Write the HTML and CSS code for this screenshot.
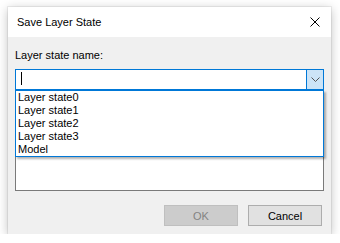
FILE: index.html
```html
<!DOCTYPE html>
<html lang="en">
<head>
  <meta charset="UTF-8" />
  <meta name="viewport" content="width=device-width, initial-scale=1.0" />
  <title>Save Layer State</title>
  <link rel="stylesheet" href="styles.css">
</head>
<body>
  <div class="dialog">
    <div class="titlebar">
      <span>Save Layer State</span>
      <svg class="close" width="10" height="10" viewBox="0 0 10 10">
        <path d="M0.5 0.5 L9.5 9.5 M9.5 0.5 L0.5 9.5" stroke="#000" stroke-width="1" fill="none" />
      </svg>
    </div>

    <div class="content">
      <div class="label">Layer state name:</div>

      <div class="combo">
        <span class="caret"></span>
        <span class="combo-btn">
          <svg width="9" height="5" viewBox="0 0 9 5">
            <path d="M0.5 0.5 L4.5 4.5 L8.5 0.5" stroke="#555" stroke-width="1" fill="none" />
          </svg>
        </span>
        <ul class="dropdown">
          <li>Layer state0</li>
          <li>Layer state1</li>
          <li>Layer state2</li>
          <li>Layer state3</li>
          <li>Model</li>
        </ul>
      </div>

      <div class="listbox"></div>

      <div class="buttons">
        <button class="btn" disabled>OK</button>
        <button class="btn">Cancel</button>
      </div>
    </div>
  </div>
</body>
</html>
```

FILE: styles.css
```css
body {
  margin: 0;
  background: #fff;
  font-family: "Liberation Sans", Arial, sans-serif;
  font-size: 11px;
  color: #000;
}
.dialog {
  margin: 7px 0 0 8px;
  width: 323px;
  height: 227px;
  background: #f0f0f0;
  box-shadow: 0 0 0 1px rgba(0, 0, 0, 0.06), 0 2px 10px rgba(0, 0, 0, 0.25);
  display: flex;
  flex-direction: column;
}
.titlebar {
  height: 30px;
  background: #fff;
  display: flex;
  align-items: center;
  justify-content: space-between;
  padding: 0 11px 0 9px;
  font-size: 11px;
}
.content {
  padding: 0 7px;
  display: flex;
  flex-direction: column;
}
.label {
  margin-top: 12px;
  line-height: 13px;
}
.combo {
  position: relative;
  margin-top: 7px;
  height: 21px;
  box-sizing: border-box;
  border: 1px solid #0078d7;
  background: #fff;
  display: flex;
}
.caret {
  width: 1px;
  height: 13px;
  margin: 2px 0 0 5px;
  background: #000;
}
.combo-btn {
  margin-left: auto;
  width: 16px;
  border-left: 1px solid #0078d7;
  background: #cce4f7;
  display: flex;
  align-items: center;
  justify-content: center;
}
.dropdown {
  position: absolute;
  left: -1px;
  right: -1px;
  top: 20px;
  margin: 0;
  padding: 0;
  list-style: none;
  background: #fff;
  border: 1px solid #0078d7;
  box-shadow: 2px 2px 2px rgba(0, 0, 0, 0.3);
  z-index: 2;
}
.dropdown li {
  height: 13px;
  line-height: 13px;
  padding-left: 2px;
}
.listbox {
  margin-top: 5px;
  height: 96px;
  box-sizing: border-box;
  border: 1px solid #7a7a7a;
  background: #fff;
}
.buttons {
  margin: 14px 2px 0 0;
  display: flex;
  justify-content: flex-end;
  gap: 10px;
}
.btn {
  width: 74px;
  height: 21px;
  padding: 0;
  font-family: inherit;
  font-size: 11px;
  background: #e1e1e1;
  border: 1px solid #adadad;
  color: #000;
}
.btn:disabled {
  background: #cccccc;
  border-color: #bfbfbf;
  color: #838383;
}
```
